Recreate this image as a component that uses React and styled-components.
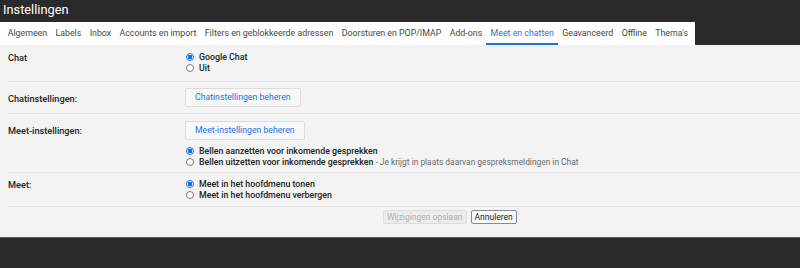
import React from "react";
import styled, { createGlobalStyle } from "styled-components";

const GlobalStyle = createGlobalStyle`
  html, body {
    margin: 0;
    padding: 0;
    background: #2a2a2a;
  }
  body {
    font-family: Roboto, "Liberation Sans", Arial, sans-serif;
    -webkit-font-smoothing: antialiased;
  }
`;

const tabs = [
  "Algemeen",
  "Labels",
  "Inbox",
  "Accounts en import",
  "Filters en geblokkeerde adressen",
  "Doorsturen en POP/IMAP",
  "Add-ons",
  "Meet en chatten",
  "Geavanceerd",
  "Offline",
  "Thema's"
];

const Radio = ({ checked, label, note }) => (
  <RadioLine>
    <RadioDot checked={checked} />
    <RadioLabel>{label}</RadioLabel>
    {note && <Note>&nbsp;- {note}</Note>}
  </RadioLine>
);

export default function App() {
  return (
    <Page>
      <GlobalStyle />
      <Header>Instellingen</Header>
      <TabBar>
        {tabs.map(t => (
          <Tab key={t} active={t === "Meet en chatten"}>
            {t}
          </Tab>
        ))}
      </TabBar>

      <Content>
        <Row $pad="7px 0 7px">
          <Label>Chat</Label>
          <Value>
            <Radio checked label="Google Chat" />
            <Radio label="Uit" />
          </Value>
        </Row>

        <Row $pad="6px 0 6px">
          <Label $top="5px">Chatinstellingen:</Label>
          <Value>
            <LinkButton>Chatinstellingen beheren</LinkButton>
          </Value>
        </Row>

        <Row $pad="7px 0 4px">
          <Label $top="4px">Meet-instellingen:</Label>
          <Value>
            <LinkButton>Meet-instellingen beheren</LinkButton>
            <Options>
              <Radio checked label="Bellen aanzetten voor inkomende gesprekken" />
              <Radio
                label="Bellen uitzetten voor inkomende gesprekken"
                note="Je krijgt in plaats daarvan gespreksmeldingen in Chat"
              />
            </Options>
          </Value>
        </Row>

        <Row $pad="6px 0 5px">
          <Label>Meet:</Label>
          <Value>
            <Radio checked label="Meet in het hoofdmenu tonen" />
            <Radio label="Meet in het hoofdmenu verbergen" />
          </Value>
        </Row>

        <Actions>
          <SmallButton disabled>Wijzigingen opslaan</SmallButton>
          <SmallButton>Annuleren</SmallButton>
        </Actions>
      </Content>
      <Bottom />
    </Page>
  );
}

const Page = styled.div`
  width: 800px;
  height: 268px;
  overflow: hidden;
  background: #2a2a2a;
  display: flex;
  flex-direction: column;
`;

const Header = styled.div`
  height: 22px;
  line-height: 20px;
  padding-left: 3px;
  color: #ffffff;
  font-size: 12.8px;
  background: #2a2a2a;
`;

const TabBar = styled.div`
  width: 695px;
  height: 23px;
  background: #ffffff;
  display: flex;
  padding-left: 3.5px;
  box-sizing: border-box;
`;

const Tab = styled.div`
  padding: 2px 4.2px 0;
  font-size: 8.8px;
  line-height: 19px;
  color: ${p => (p.active ? "#1a73e8" : "#444746")};
  border-bottom: 2px solid ${p => (p.active ? "#1a73e8" : "transparent")};
  white-space: nowrap;
`;

const Content = styled.div`
  background: #f3f3f3;
  padding-left: 8px;
  height: 193px;
  box-sizing: border-box;
`;

const Row = styled.div`
  display: grid;
  grid-template-columns: 177px 1fr;
  padding: ${p => p.$pad};
  border-bottom: 1px solid #e4e4e4;
`;

const Label = styled.div`
  font-size: 9.2px;
  font-weight: 500;
  color: #222222;
  line-height: 11px;
  padding-top: ${p => p.$top || "0"};
`;

const Value = styled.div`
  display: flex;
  flex-direction: column;
  align-items: flex-start;
`;

const Options = styled.div`
  margin-top: 6px;
`;

const RadioLine = styled.div`
  display: flex;
  align-items: center;
  height: 11px;
  font-size: 8.8px;
  white-space: nowrap;
`;

const RadioDot = styled.span`
  width: 8px;
  height: 8px;
  border-radius: 50%;
  box-sizing: border-box;
  margin: 0 5px 0 1px;
  border: 1px solid ${p => (p.checked ? "#1a73e8" : "#7a7a7a")};
  background: ${p =>
    p.checked
      ? "radial-gradient(circle, #1a73e8 0 2.2px, #ffffff 2.6px)"
      : "#ffffff"};
`;

const RadioLabel = styled.span`
  font-weight: 500;
  color: #222222;
`;

const Note = styled.span`
  color: #6b6b6b;
  font-size: 8.4px;
`;

const LinkButton = styled.div`
  height: 19px;
  box-sizing: border-box;
  padding: 0 9px;
  border: 1px solid #dcdcdc;
  border-radius: 2px;
  background: #f7f7f7;
  color: #1a73e8;
  font-size: 8.7px;
  line-height: 17px;
`;

const Actions = styled.div`
  display: flex;
  gap: 4px;
  padding: 3px 0 0 375px;
`;

const SmallButton = styled.div`
  height: 14px;
  box-sizing: border-box;
  padding: 0 3px;
  font-size: 8.5px;
  line-height: 12px;
  border-radius: 2px;
  border: 1px solid ${p => (p.disabled ? "#dddddd" : "#8a8a8a")};
  background: ${p => (p.disabled ? "#ececec" : "#fafafa")};
  color: ${p => (p.disabled ? "#b0b0b0" : "#222222")};
`;

const Bottom = styled.div`
  height: 30px;
  border-top: 1px solid #5a5a5a;
  background: #2a2a2a;
`;
